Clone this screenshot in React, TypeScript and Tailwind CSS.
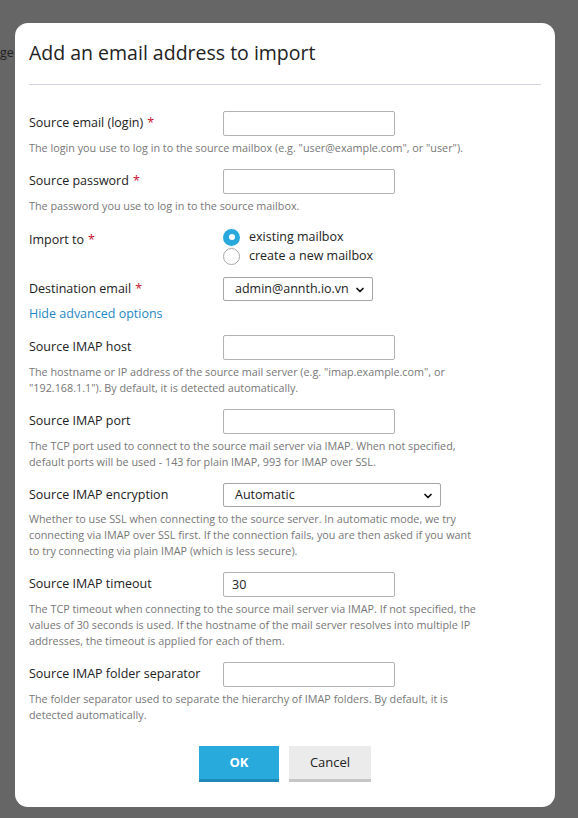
import { ChevronDown } from 'lucide-react';

const font = { fontFamily: '"Open Sans", "Noto Sans", sans-serif' };

function Req() {
  return <span className="text-[#c8102e] ml-1">*</span>;
}

function TextInput({ value = '' }: { value?: string }) {
  return (
    <input
      defaultValue={value}
      className="w-[172px] h-[25px] border border-[#b3b3b3] rounded-[2px] px-2 text-[12.5px] text-[#222] bg-white outline-none"
    />
  );
}

function SelectBox({ value, width }: { value: string; width: string }) {
  return (
    <div className={`relative h-[24px] ${width} border border-[#a6a6a6] rounded-[2px] bg-white flex items-center`}>
      <span className="pl-[11px] text-[12.5px] text-[#222]">{value}</span>
      <ChevronDown className="absolute right-[6px] top-[6px] h-[12px] w-[12px] text-[#111]" strokeWidth={3.5} />
    </div>
  );
}

function Row({
  label,
  required,
  control,
  desc,
}: {
  label: string;
  required?: boolean;
  control: React.ReactNode;
  desc?: React.ReactNode;
}) {
  return (
    <div className="mb-[13px]">
      <div className="flex items-center">
        <div className="w-[194px] text-[12.5px] text-[#222]">
          {label}
          {required && <Req />}
        </div>
        {control}
      </div>
      {desc && <p className="mt-[4px] text-[10.8px] leading-[16px] text-[#777]">{desc}</p>}
    </div>
  );
}

export default function App() {
  return (
    <div className="relative w-[578px] h-[818px] bg-[#666666] overflow-hidden" style={font}>
      <span className="absolute left-0 top-[44px] text-[12.5px] text-[#222]">ge</span>
      <div className="absolute left-[15px] top-[23px] w-[540px] h-[784px] bg-white rounded-[13px] px-[14px]">
        <h1 className="pt-[15px] text-[19.5px] leading-[30px] text-[#222] pb-[16px] border-b border-[#d3d3dc]">
          Add an email address to import
        </h1>

        <div className="pt-[26px]">
          <Row
            label="Source email (login)"
            required
            control={<TextInput />}
            desc={<>The login you use to log in to the source mailbox (e.g. "user@example.com", or "user").</>}
          />
          <Row
            label="Source password"
            required
            control={<TextInput />}
            desc={<>The password you use to log in to the source mailbox.</>}
          />

          <div className="flex mb-[12px] pt-[1px]">
            <div className="w-[194px] text-[12.5px] leading-[19px] text-[#222] pt-[2px]">
              Import to
              <Req />
            </div>
            <div className="flex flex-col gap-[1px]">
              <label className="flex items-center gap-[9px] text-[12.5px] leading-[18px] text-[#222]">
                <span className="w-[17px] h-[17px] rounded-full bg-[#28a9dd] flex items-center justify-center">
                  <span className="w-[6px] h-[6px] rounded-full bg-white" />
                </span>
                existing mailbox
              </label>
              <label className="flex items-center gap-[9px] text-[12.5px] leading-[18px] text-[#222]">
                <span className="w-[17px] h-[17px] rounded-full border border-[#a6a6a6] bg-white" />
                create a new mailbox
              </label>
            </div>
          </div>

          <div className="flex items-center mb-[5px]">
            <div className="w-[194px] text-[12.5px] text-[#222]">
              Destination email
              <Req />
            </div>
            <SelectBox value="admin@annth.io.vn" width="w-[150px]" />
          </div>

          <a className="block text-[12.5px] leading-[16px] text-[#1f87c2] mb-[13px]">Hide advanced options</a>

          <Row
            label="Source IMAP host"
            control={<TextInput />}
            desc={
              <>
                The hostname or IP address of the source mail server (e.g. "imap.example.com", or
                <br />
                "192.168.1.1"). By default, it is detected automatically.
              </>
            }
          />
          <Row
            label="Source IMAP port"
            control={<TextInput />}
            desc={
              <>
                The TCP port used to connect to the source mail server via IMAP. When not specified,
                <br />
                default ports will be used - 143 for plain IMAP, 993 for IMAP over SSL.
              </>
            }
          />
          <Row
            label="Source IMAP encryption"
            control={<SelectBox value="Automatic" width="w-[218px]" />}
            desc={
              <>
                Whether to use SSL when connecting to the source server. In automatic mode, we try
                <br />
                connecting via IMAP over SSL first. If the connection fails, you are then asked if you want
                <br />
                to try connecting via plain IMAP (which is less secure).
              </>
            }
          />
          <Row
            label="Source IMAP timeout"
            control={<TextInput value="30" />}
            desc={
              <>
                The TCP timeout when connecting to the source mail server via IMAP. If not specified, the
                <br />
                values of 30 seconds is used. If the hostname of the mail server resolves into multiple IP
                <br />
                addresses, the timeout is applied for each of them.
              </>
            }
          />
          <Row
            label="Source IMAP folder separator"
            control={<TextInput />}
            desc={
              <>
                The folder separator used to separate the hierarchy of IMAP folders. By default, it is
                <br />
                detected automatically.
              </>
            }
          />
        </div>

        <div className="flex justify-center gap-[10px] pt-[10px]">
          <button className="w-[80px] h-[36px] bg-[#28aadc] border-b-[3px] border-[#1d8ab7] text-white text-[13px] font-bold">
            OK
          </button>
          <button className="w-[82px] h-[36px] bg-[#ebebeb] border-b-[3px] border-[#c6c6c6] text-[#222] text-[13px]">
            Cancel
          </button>
        </div>
      </div>
    </div>
  );
}
